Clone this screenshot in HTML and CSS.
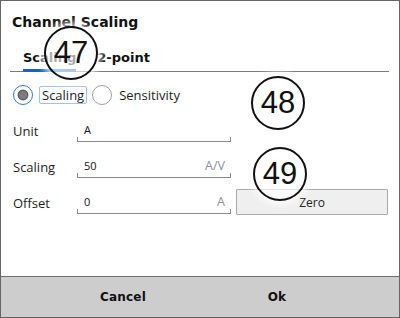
FILE: index.html
```html
<!DOCTYPE html>
<html>
<head>
  <title>Channel Scaling</title>
  <link rel="stylesheet" href="styles.css">
</head>
<body>

<div class="dialog">
  <div class="content">
    <h1 class="title">Channel Scaling</h1>

    <div class="tabs">
      <span class="tab active">Scaling</span>
      <span class="tab">2-point</span>
    </div>

    <div class="modes">
      <span class="radio checked"></span>
      <span class="mode-label focused">Scaling</span>
      <span class="radio"></span>
      <span class="mode-label plain">Sensitivity</span>
    </div>

    <div class="fields">
      <span class="label">Unit</span>
      <div class="field"><span class="value">A</span></div>
      <span></span>

      <span class="label">Scaling</span>
      <div class="field"><span class="value">50</span><span class="unit">A/V</span></div>
      <span></span>

      <span class="label">Offset</span>
      <div class="field"><span class="value">0</span><span class="unit">A</span></div>
      <button type="button" class="zero-btn">Zero</button>
    </div>
  </div>

  <div class="footer">
    <button type="button" class="footer-btn">Cancel</button>
    <button type="button" class="footer-btn">Ok</button>
  </div>

  <span class="callout c47">47</span>
  <span class="callout c48">48</span>
  <span class="callout c49">49</span>
</div>

</body>
</html>
```

FILE: styles.css
```css
body { margin: 0; background: #fff; font-family: "Open Sans", sans-serif; color: #1e1e1e; }

.dialog {
  position: relative;
  width: 400px;
  height: 318px;
  box-sizing: border-box;
  border: 1px solid #666;
  display: flex;
  flex-direction: column;
  overflow: hidden;
}

.content { flex: 1; padding: 11px 10px 0 9px; }

.title {
  margin: 0;
  padding-left: 2px;
  font: bold 14px/20px "DejaVu Sans", sans-serif;
  color: #111;
}

/* tabs */
.tabs {
  display: flex;
  gap: 21px;
  margin-top: 18px;
  padding-left: 13px;
  border-bottom: 1px solid #7a7a7a;
}
.tab {
  font: bold 13px/16px "DejaVu Sans", sans-serif;
  color: #111;
  padding-bottom: 3px;
  border-bottom: 3px solid transparent;
  margin-bottom: -1px;
}
.tab.active { border-bottom-color: #1565c0; }

/* radio row */
.modes { display: flex; align-items: center; height: 20px; margin-top: 13px; padding-left: 3px; }
.radio {
  width: 20px;
  height: 20px;
  box-sizing: border-box;
  border: 1px solid #a2a2a2;
  border-radius: 50%;
  background: #fff;
  margin-right: 6px;
}
.radio.checked {
  border: 1.5px solid #2f7fd8;
  background: radial-gradient(circle, #7c7c7c 0 4px, #5c5c5c 4.5px 5px, #fff 5.8px);
}
.mode-label { font-size: 13px; line-height: 16px; }
.mode-label.focused {
  border: 1px solid #9fc3ea;
  border-radius: 2px;
  padding: 0 2px;
  margin-right: 5px;
}
.mode-label.plain { margin-left: 1px; }

/* fields */
.fields {
  display: grid;
  grid-template-columns: 63px 153px 152px;
  grid-auto-rows: 22px;
  column-gap: 5px;
  row-gap: 14px;
  align-items: end;
  margin-top: 15px;
}
.field + span, .field + .zero-btn { margin-left: 0; }
.label { font-size: 13px; line-height: 18px; padding-left: 3px; margin-bottom: 2px; }
.field {
  display: flex;
  align-items: flex-end;
  justify-content: space-between;
  height: 22px;
  box-sizing: border-box;
  margin-left: -1px;
  padding: 0 6px 4px 7px;
  border-bottom: 1px solid #8a8a8a;
  background:
    linear-gradient(#8a8a8a, #8a8a8a) left bottom / 1px 4px no-repeat,
    linear-gradient(#8a8a8a, #8a8a8a) right bottom / 1px 4px no-repeat;
}
.value { font-size: 11px; line-height: 15px; color: #111; }
.unit { font-size: 12.5px; line-height: 15px; color: #8a909a; }

.zero-btn {
  height: 26px;
  margin-bottom: -1px;
  border: 1px solid #a9a9a9;
  border-radius: 1px;
  background: #efefef;
  font: 12px "Open Sans", sans-serif;
  color: #222;
}

/* footer */
.footer {
  height: 41px;
  box-sizing: border-box;
  border-top: 1px solid #6e6e6e;
  background: #cdcdcd;
  display: flex;
  justify-content: center;
  align-items: center;
  gap: 34px;
}
.footer-btn {
  width: 120px;
  border: 0;
  background: none;
  font: bold 12px "DejaVu Sans", sans-serif;
  letter-spacing: 0.2px;
  color: #111;
}

/* numbered callouts over the dialog */
.callout {
  position: absolute;
  width: 54px;
  height: 54px;
  box-sizing: border-box;
  border: 2px solid #111;
  border-radius: 50%;
  background: rgba(255, 255, 255, 0.65);
  box-shadow: 0 0 6px 4px rgba(255, 255, 255, 0.75);
  display: flex;
  align-items: center;
  justify-content: center;
  font: 31px "Liberation Sans", sans-serif;
  color: #111;
}
.c47 { left: 43px; top: 25px; }
.c48 { left: 250px; top: 75px; }
.c49 { left: 252px; top: 146px; }
```
